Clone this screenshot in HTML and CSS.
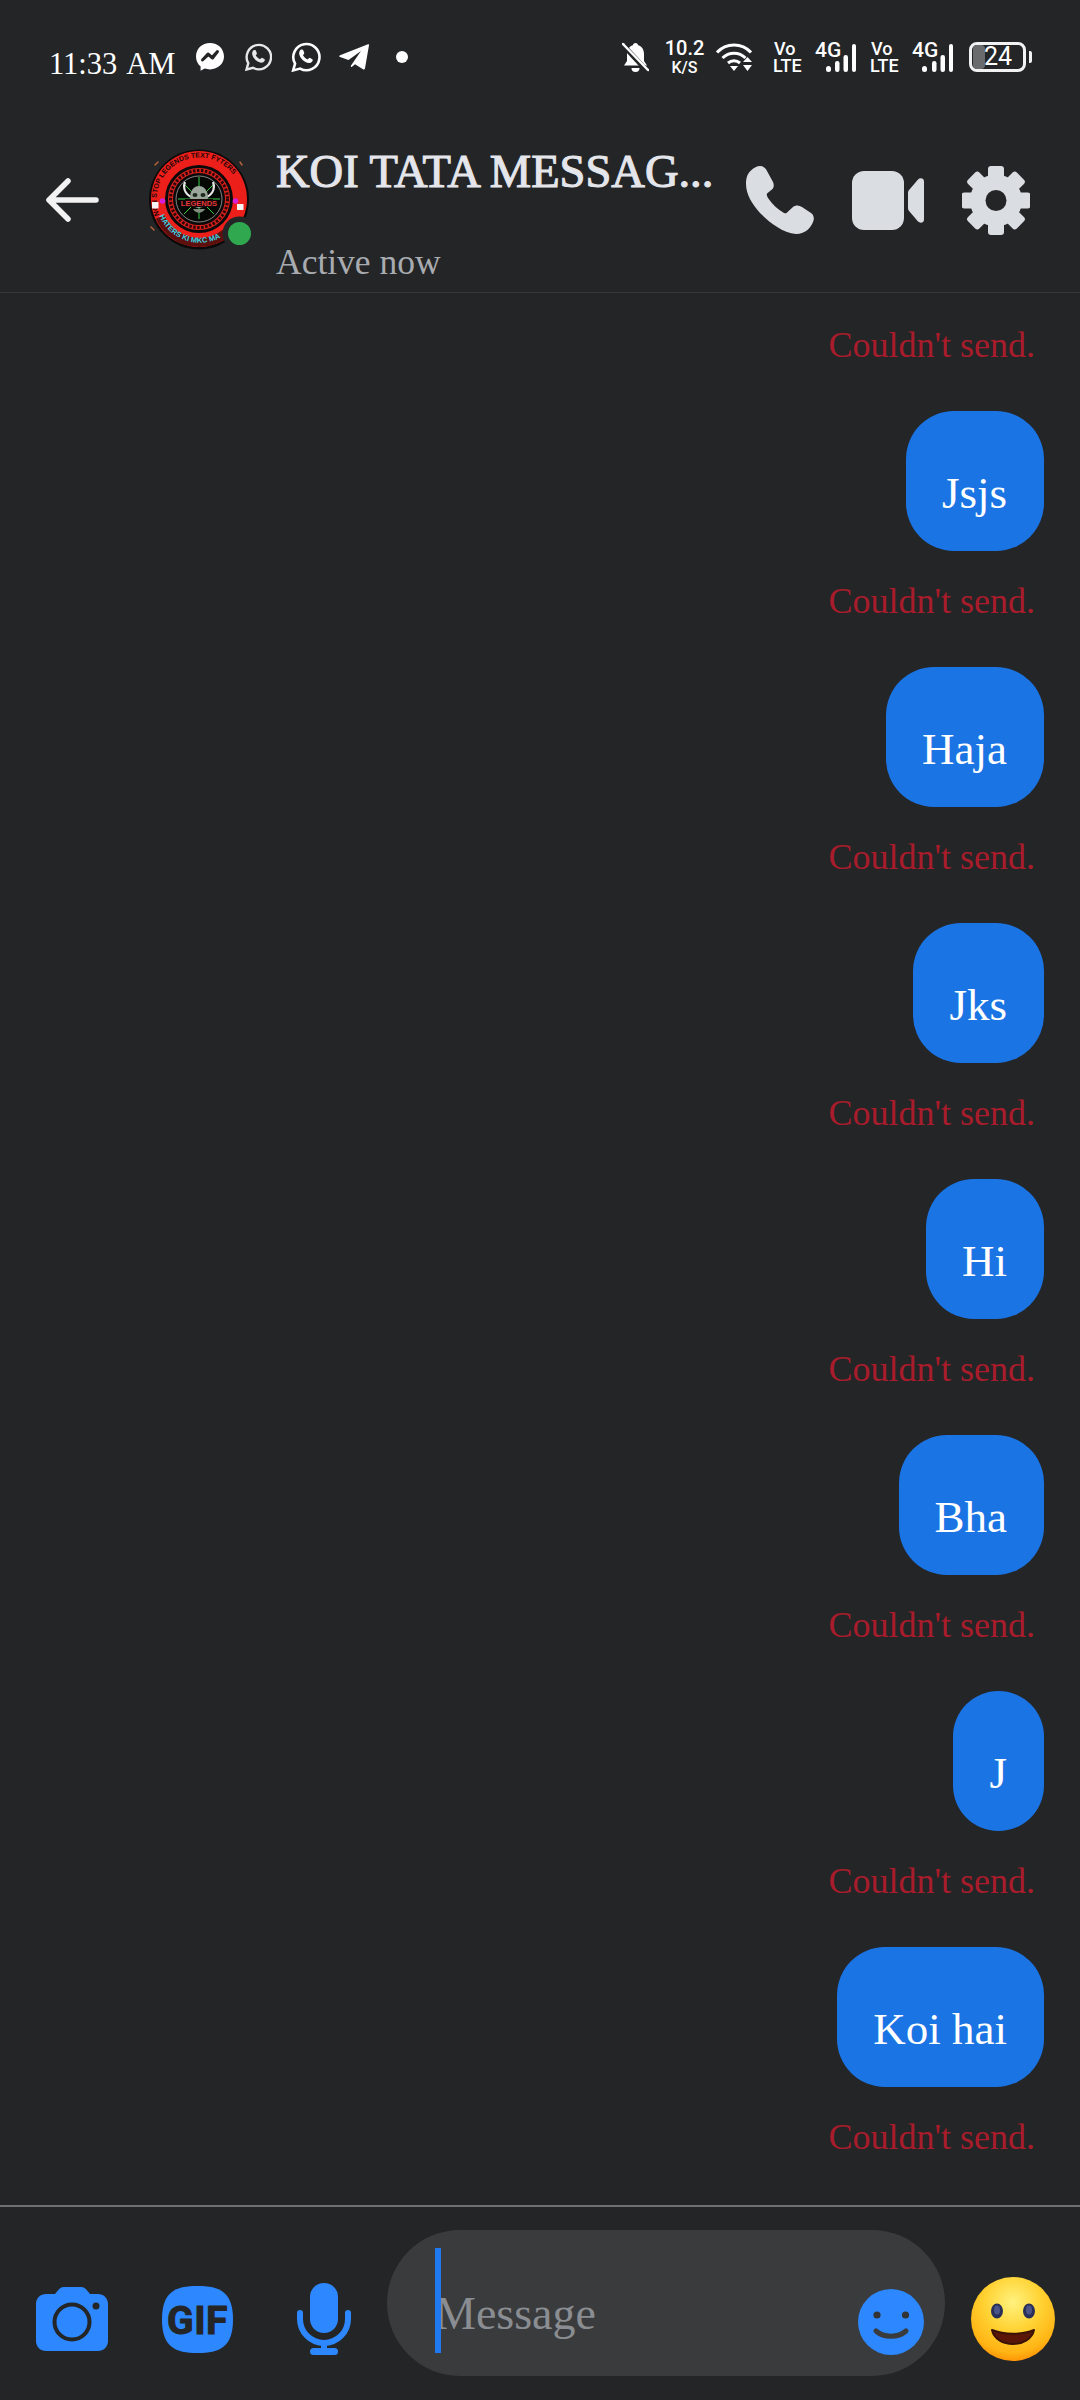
FILE: index.html
```html
<!DOCTYPE html>
<html lang="en">
  <head>
    <meta charset="UTF-8" />
    <meta name="viewport" content="width=device-width, initial-scale=1.0" />
    <title>KOI TATA MESSAGES</title>
    <link rel="stylesheet" href="styles.css">
  </head>
  <body>
    <div class="status-bar">
      <span class="time">11:33 AM</span>
      <!-- messenger -->
      <svg class="st st-msg" width="28" height="28" viewBox="0 0 28 28">
        <path fill="#fff" d="M14 0C6 0 0 5.800 0 13.600c0 4 1.700 7.600 4.600 10v4.200l4.100-2.200c1.600.5 3.500.8 5.300.8 8 0 14-5.800 14-12.800C28 5.800 22 0 14 0z"/>
        <path fill="none" stroke="#242527" stroke-width="3" stroke-linejoin="round" stroke-linecap="round" d="M6.500 17l5.500-6 4 3.500 5.500-6-5 6.500-4-3.500z"/>
      </svg>
      <!-- whatsapp -->
      <svg class="st st-wa1" width="27" height="28" viewBox="0 0 27 28">
        <path fill="none" stroke="#e8e8e8" stroke-width="2.400" d="M1.500 26.500l1.800-6.300A12.200 12.200 0 1 1 8 24.800z"/>
        <path fill="#e8e8e8" d="M9.500 7c1 0 1.300.3 1.700 1.500l.7 1.800c.1.500-.8 1.500-1.200 2 .9 1.700 2.500 3.200 4.400 4 .6-.5 1.300-1.500 1.900-1.500l2.300 1.200c.6.300.6 1 .3 1.800-.5 1.200-2 1.900-3.200 1.900-4.500-.2-9-5-9.300-9.200 0-1.500 1-3.500 2.200-3.500z"/>
      </svg>
      <svg class="st st-wa2" width="30" height="30" viewBox="0 0 27 28">
        <path fill="none" stroke="#fff" stroke-width="2.400" d="M1.500 26.500l1.800-6.300A12.200 12.200 0 1 1 8 24.800z"/>
        <path fill="#fff" d="M9.500 7c1 0 1.300.3 1.700 1.500l.7 1.800c.1.500-.8 1.500-1.200 2 .9 1.700 2.500 3.200 4.400 4 .6-.5 1.300-1.500 1.900-1.500l2.300 1.200c.6.300.6 1 .3 1.800-.5 1.200-2 1.900-3.200 1.900-4.500-.2-9-5-9.300-9.200 0-1.500 1-3.500 2.200-3.500z"/>
      </svg>
      <!-- telegram -->
      <svg class="st st-tg" width="30" height="26" viewBox="0 0 30 26">
        <path fill="#fff" d="M29 .3c.7-.3 1.200.2 1 1l-4 23c-.2 1.200-1.200 1.500-2 1l-8-5-3 2.500c-1 .6-1.500-.2-1-1.200L22 7 9.500 16 1 13c-1-.4-1-1.300 0-1.700z"/>
      </svg>
      <span class="st-dot"></span>

      <div class="status-right">
        <svg class="bell" width="27" height="30" viewBox="0 0 27 30">
          <path fill="#fff" d="M13.500 1c1.500 0 2.500 1 2.700 2.300 4 1.200 5.800 4.700 5.800 8.700v7l3 4.500H2l3-4.500v-7c0-4 2-7.500 5.800-8.700C11 2 12 1 13.500 1z"/>
          <path fill="#fff" d="M9.500 26h8a4 4 0 0 1-8 0z"/>
          <path stroke="#242527" stroke-width="5" d="M0 2l25 27"/>
          <path stroke="#fff" stroke-width="2.500" stroke-linecap="round" d="M1 2l25 26"/>
        </svg>
        <div class="speed"><span class="speed-num">10.2</span><span class="speed-unit">K/S</span></div>
        <svg class="wifi" width="36" height="28" viewBox="0 0 36 28">
          <g fill="none" stroke="#fff" stroke-width="3">
            <path d="M1 9.500C10-.5 26-.5 35 9.500"/>
            <path d="M6.500 15c6.500-6.500 16.500-6.500 23 0"/>
            <path d="M12 20c3.500-3 8.500-3 12 0"/>
          </g>
          <path fill="#fff" d="M14 23h8l-4 5zM27 19h9l-4.500-5zM27 22h9l-4.500 6z"/>
        </svg>
        <div class="volte"><span>Vo</span><span>LTE</span></div>
        <div class="signal">
          <span class="sig-text">4G</span>
          <svg class="bars" width="41" height="30" viewBox="0 0 41 30">
            <rect x="11" y="24" width="5" height="6" rx="2.500" fill="#fff"/>
            <rect x="20" y="19" width="4.500" height="11" rx="2.200" fill="#fff"/>
            <rect x="28.500" y="13" width="4.500" height="17" rx="2.200" fill="#fff"/>
            <rect x="37" y="2" width="4" height="28" rx="2" fill="#fff"/>
          </svg>
        </div>
        <div class="volte volte-2"><span>Vo</span><span>LTE</span></div>
        <div class="signal">
          <span class="sig-text">4G</span>
          <svg class="bars" width="41" height="30" viewBox="0 0 41 30">
            <rect x="10" y="24" width="5" height="6" rx="2.500" fill="#fff"/>
            <rect x="20" y="19" width="4.500" height="11" rx="2.200" fill="#fff"/>
            <rect x="28.500" y="13" width="4.500" height="17" rx="2.200" fill="#fff"/>
            <rect x="37" y="2" width="4" height="28" rx="2" fill="#fff"/>
          </svg>
        </div>
        <div class="battery">
          <span class="battery-fill"></span>
          <span class="battery-num">24</span>
        </div>
        <span class="battery-nub"></span>
      </div>
    </div>

    <div class="header">
      <svg class="back" width="54" height="44" viewBox="0 0 54 44">
        <path fill="none" stroke="#f2f2f2" stroke-width="5.500" stroke-linecap="round" stroke-linejoin="round" d="M51 22H4M23 3L4 22l19 19"/>
      </svg>
      <svg class="avatar" width="104" height="102" viewBox="0 0 104 102">
        <defs>
          <path id="arcTop" d="M13 68A42.500 42.500 0 1 1 93 62"/>
          <path id="arcBottom" d="M12 66a44 44 0 0 0 66 20"/>
        </defs>
        <g stroke="#b5613a" stroke-width="1.500" stroke-linecap="round">
          <path d="M8 16l3-3M4 78l3 3M93 13l2 3"/>
        </g>
        <circle cx="52" cy="50.500" r="50" fill="#0a0a0a"/>
        <circle cx="52" cy="50" r="48" fill="#ec1f1b"/>
        <path d="M13 68a43 43 0 0 0 66 16" fill="none" stroke="#5c100e" stroke-width="9"/>
        <text class="av-text"><textPath href="#arcTop" startOffset="2">NON STOP LEGENDS TEXT FYTERS</textPath></text>
        <text class="av-text av-cyan"><textPath href="#arcBottom" startOffset="1">HATERS KI MKC MA</textPath></text>
        <circle cx="52" cy="50" r="34" fill="#0a0a0a"/>
        <circle cx="52" cy="50" r="28.500" fill="none" stroke="#d81f1b" stroke-width="5"/>
        <circle cx="52" cy="50" r="28.500" fill="none" stroke="#2a0808" stroke-width="3" stroke-dasharray="2.500 1.500"/>
        <circle cx="52" cy="50" r="23" fill="#050705" stroke="#d8d8d8" stroke-width="0.600"/>
        <path d="M52 28v42M37 35l30 30M67 35L37 65M31 50h42" stroke="#37d14a" stroke-width="1"/>
        <path d="M38 33c-3 8 2 14 9 16M66 33c3 8-2 14-9 16" fill="none" stroke="#e6e6e6" stroke-width="2.200"/>
        <ellipse cx="52" cy="48" rx="9" ry="11" fill="#9aa69a"/>
        <ellipse cx="48" cy="46" rx="2.500" ry="2" fill="#1b2a1c"/>
        <ellipse cx="56" cy="46" rx="2.500" ry="2" fill="#1b2a1c"/>
        <path d="M46 60c3 5 9 5 12 0z" fill="#7f8d7f"/>
        <rect x="38" y="50" width="28" height="8" fill="#16090a"/>
        <text class="av-label" x="52" y="57" text-anchor="middle">LEGENDS</text>
        <circle cx="15.500" cy="52" r="2.800" fill="#d81fd8"/>
        <circle cx="88.500" cy="52" r="2.800" fill="#d81fd8"/>
        <rect x="5" y="53" width="6.500" height="6.500" fill="#f4f4f4"/>
        <rect x="90" y="55" width="6.500" height="6" fill="#f4f4f4"/>
        <circle cx="92.500" cy="84.500" r="17" fill="#242527"/>
        <circle cx="92.500" cy="84.500" r="11.500" fill="#2fa84f"/>
      </svg>
      <div class="title-box">
        <div class="title">KOI TATA MESSAG...</div>
        <div class="subtitle">Active now</div>
      </div>
      <svg class="phone" width="68" height="68" viewBox="0 0 68 68">
        <path fill="#dadde1" d="M0 18C0 11 2 7 5 4.500 8 1.500 11 0 14 0c3 0 5.500 2 7 5l6 11c1.500 3 .5 6-.5 7L21 27.500c-.5 1 0 2.500 1 4.500 4 6 9 11 16 15 1.500.5 2.500.5 3-.5l6-5.500c2.500-2 6-2 9 0l9 6c3 2 3.500 6 2 9-2 5-7 12-17 12-14-1-28-13-36-21C6 38 0 28 0 18z"/>
      </svg>
      <svg class="video" width="72" height="59" viewBox="0 0 72 59">
        <rect width="52" height="59" rx="12" fill="#dadde1"/>
        <path fill="#dadde1" d="M56 22c0-1.500.5-2.500 1.500-3.500L66 8.500c2-2 6-1.500 6 2v38c0 3.500-4 4-6 2l-8.500-10c-1-1-1.500-2-1.500-3.500z"/>
      </svg>
      <svg class="gear" width="68" height="69" viewBox="0 0 68 69">
        <g fill="#dadde1">
          <circle cx="34" cy="34.500" r="26"/>
          <rect x="26" y="0" width="16" height="69" rx="3"/>
          <rect x="26" y="0" width="16" height="69" rx="3" transform="rotate(45 34 34.500)"/>
          <rect x="26" y="0" width="16" height="69" rx="3" transform="rotate(90 34 34.500)"/>
          <rect x="26" y="0" width="16" height="69" rx="3" transform="rotate(135 34 34.500)"/>
        </g>
        <circle cx="34" cy="34.500" r="10.500" fill="#242527"/>
      </svg>
    </div>

    <div class="thread">
      <div class="error">Couldn't send.</div>
      <div class="bubble">Jsjs</div>
      <div class="error">Couldn't send.</div>
      <div class="bubble">Haja</div>
      <div class="error">Couldn't send.</div>
      <div class="bubble">Jks</div>
      <div class="error">Couldn't send.</div>
      <div class="bubble">Hi</div>
      <div class="error">Couldn't send.</div>
      <div class="bubble">Bha</div>
      <div class="error">Couldn't send.</div>
      <div class="bubble">J</div>
      <div class="error">Couldn't send.</div>
      <div class="bubble">Koi hai</div>
      <div class="error">Couldn't send.</div>
    </div>

    <div class="composer">
      <div class="tools">
        <svg class="camera" width="72" height="64" viewBox="0 0 72 64">
          <path fill="#2d88ff" d="M10 7h9l2-2.500C23 2 25 0 28 0h17c3 0 5 2 7 4.500L54 7h8c5.500 0 10 4 10 10v37c0 6-4.500 10-10 10H10C4.500 64 0 60 0 54V17C0 11 4.500 7 10 7z"/>
          <circle cx="36" cy="35" r="17.500" fill="none" stroke="#242527" stroke-width="4"/>
          <circle cx="60" cy="19" r="3.500" fill="#242527"/>
        </svg>
        <svg class="gif" width="71" height="67" viewBox="0 0 71 67">
          <path fill="#2d88ff" d="M35.500 0C58 0 71 6 71 33.500S58 67 35.500 67 0 61 0 33.500 13 0 35.500 0z"/>
          <text class="gif-text" x="35.500" y="48" text-anchor="middle">GIF</text>
        </svg>
        <svg class="mic" width="54" height="72" viewBox="0 0 54 72">
          <rect x="13" y="0" width="28" height="50" rx="14" fill="#2d88ff"/>
          <path fill="none" stroke="#2d88ff" stroke-width="6" stroke-linecap="round" d="M3 30v6a24 24 0 0 0 48 0v-6M27 60v8"/>
          <rect x="13" y="65" width="28" height="7" rx="3.500" fill="#2d88ff"/>
        </svg>
      </div>
      <div class="field">
        <span class="caret"></span>
        <span class="placeholder">Message</span>
        <svg class="smile-btn" width="66" height="66" viewBox="0 0 66 66">
          <circle cx="33" cy="33" r="33" fill="#2d88ff"/>
          <circle cx="19" cy="26" r="3.600" fill="#333"/>
          <circle cx="47.500" cy="26" r="3.600" fill="#333"/>
          <path fill="none" stroke="#3a3b3d" stroke-width="5" stroke-linecap="round" d="M18 42c8 7 22 7 30 0"/>
        </svg>
      </div>
      <svg class="emoji" width="84" height="84" viewBox="0 0 84 84">
        <defs>
          <radialGradient id="face" cx="0.500" cy="0.300" r="0.750">
            <stop offset="0" stop-color="#fff27e"/>
            <stop offset="0.450" stop-color="#ffd233"/>
            <stop offset="0.800" stop-color="#ffb414"/>
            <stop offset="1" stop-color="#ff8500"/>
          </radialGradient>
        </defs>
        <ellipse cx="42" cy="42" rx="42" ry="42" fill="url(#face)"/>
        <ellipse cx="26" cy="34" rx="6" ry="7.500" fill="#28305a"/>
        <ellipse cx="58" cy="34" rx="6" ry="7.500" fill="#28305a"/>
        <ellipse cx="26" cy="33" rx="3" ry="4.500" fill="#4a5488"/>
        <ellipse cx="58" cy="33" rx="3" ry="4.500" fill="#4a5488"/>
        <path fill="#5a1708" stroke="#3a1206" stroke-width="2" stroke-linejoin="round" d="M21 53c12 5 30 5 42 0-2 9-11 14-21 14s-19-5-21-14z"/>
      </svg>
    </div>
  </body>
</html>
```

FILE: styles.css
```css
body {
  margin: 0;
  width: 1080px;
  height: 2400px;
  background: #242527;
  font-family: "Liberation Serif", serif;
  display: flex;
  flex-direction: column;
  overflow: hidden;
}

svg {
  display: block;
  flex: none;
}

/* status bar */
.status-bar {
  height: 30px;
  padding: 42px 48px 18px 49px;
  display: flex;
  align-items: center;
  color: #fff;
}
.time {
  font-size: 30.500px;
  word-spacing: 3px;
  line-height: 34px;
  margin-top: 13px;
  width: 127px;
  white-space: nowrap;
}
.st-msg {
  margin-left: 20px;
}
.st-wa1 {
  margin-left: 21px;
}
.st-wa2 {
  margin-left: 19px;
}
.st-tg {
  margin-left: 18px;
}
.st-dot {
  width: 12px;
  height: 12px;
  border-radius: 50%;
  background: #fff;
  margin-left: 27px;
}
.status-right {
  margin-left: auto;
  display: flex;
  align-items: center;
  font-family: Roboto, sans-serif;
  font-weight: 500;
}
.speed {
  margin-left: 17px;
  width: 37px;
  display: flex;
  flex-direction: column;
  align-items: center;
}
.speed-num {
  font-size: 20px;
  line-height: 19px;
}
.speed-unit {
  font-size: 16px;
  line-height: 16px;
  margin-top: 2px;
}
.wifi {
  margin-left: 13px;
}
.volte {
  margin-left: 21px;
  width: 29px;
  display: flex;
  flex-direction: column;
  font-size: 18px;
  line-height: 17px;
}
.volte-2 {
  margin-left: 14px;
}
.volte span:first-child {
  padding-left: 1px;
}
.signal {
  margin-left: 13px;
  width: 41px;
  height: 30px;
  display: flex;
}
.sig-text {
  flex: none;
  width: 25px;
  font-size: 21px;
  line-height: 19px;
  margin-top: -1px;
}
.bars {
  margin-left: -25px;
}
.battery {
  margin-left: 16px;
  width: 51px;
  height: 24px;
  border: 3px solid #f2f2f2;
  border-radius: 8px;
  display: flex;
  align-items: center;
  position: relative;
}
.battery-fill {
  position: absolute;
  left: 1px;
  top: 0;
  width: 12px;
  height: 24px;
  border-radius: 4px;
  background: #6a6b6d;
}
.battery-num {
  position: relative;
  margin-left: 12px;
  font-size: 25px;
  font-weight: 400;
  line-height: 24px;
}
.battery-nub {
  width: 3px;
  height: 12px;
  margin-left: 3px;
  border-radius: 0 2px 2px 0;
  background: #f2f2f2;
}

/* conversation header */
.header {
  height: 184px;
  padding: 18px 0 0 45px;
  border-bottom: 1px solid #38393b;
  display: flex;
  align-items: center;
}
.avatar {
  margin-left: 48px;
}
.title-box {
  align-self: flex-start;
  margin: 38px 0 0 25px;
  width: 445px;
}
.title {
  font-size: 46.500px;
  line-height: 52px;
  color: #e4e6eb;
  white-space: nowrap;
  -webkit-text-stroke: 1.100px #e4e6eb;
}
.subtitle {
  margin-top: 44px;
  font-size: 35.500px;
  line-height: 40px;
  color: #a8abb0;
}
.phone {
  margin-left: 25px;
}
.video {
  margin-left: 38px;
}
.gear {
  margin-left: 38px;
}

/* messages */
.thread {
  flex: 1;
  padding: 32px 36px 0 0;
  display: flex;
  flex-direction: column;
  align-items: flex-end;
}
.error {
  font-size: 36px;
  line-height: 40px;
  color: #a81c2c;
  margin-right: 9px;
  margin-bottom: 46px;
}
.bubble {
  font-size: 45px;
  line-height: 52px;
  color: #fff;
  background: #1b74e4;
  border-radius: 48px;
  padding: 56px 37px 32px 36px;
  margin-bottom: 30px;
}

/* bottom bar */
.composer {
  height: 170px;
  padding-top: 23px;
  border-top: 2px solid #6f7072;
  display: flex;
  align-items: flex-start;
}
.tools {
  margin: 53px 0 0 36px;
  display: flex;
  align-items: center;
  height: 72px;
}
.gif {
  margin-left: 54px;
}
.mic {
  margin-left: 64px;
}
.field {
  position: relative;
  box-sizing: border-box;
  margin-left: 36px;
  width: 558px;
  height: 146px;
  padding: 58px 21px 0 48px;
  background: #3a3b3d;
  border-radius: 73px;
  display: flex;
  align-items: flex-start;
  justify-content: space-between;
}
.caret {
  position: absolute;
  left: 48px;
  top: 18px;
  width: 6px;
  height: 105px;
  background: #2079f0;
}
.placeholder {
  font-size: 46px;
  line-height: 52px;
  color: #8a8d91;
}
.smile-btn {
  margin-top: 1px;
}
.emoji {
  margin: 47px 0 0 26px;
}
.gif-text {
  font-family: Roboto, sans-serif;
  font-weight: 700;
  font-size: 39px;
  letter-spacing: 0.500px;
  fill: #242527;
  stroke: #242527;
  stroke-width: 1px;
  stroke-linejoin: round;
}

/* tiny lettering on the group picture */
.av-text {
  font-family: "Liberation Sans", sans-serif;
  font-weight: 700;
  font-size: 7px;
  fill: #1a0505;
}
.av-cyan {
  font-size: 7.500px;
  fill: #37d5e6;
}
.av-label {
  font-family: "Liberation Sans", sans-serif;
  font-weight: 700;
  font-size: 7.500px;
  fill: #e5383b;
}
```
